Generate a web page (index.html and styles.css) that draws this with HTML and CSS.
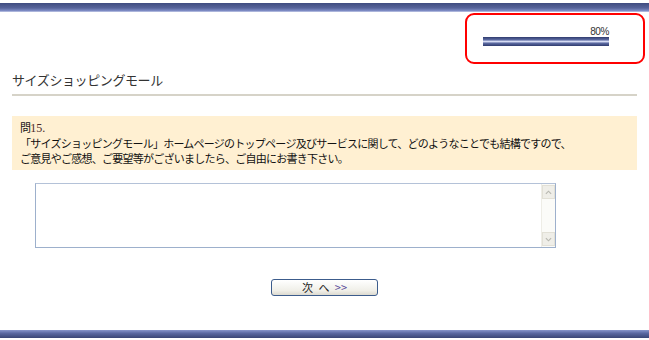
FILE: index.html
```html
<!DOCTYPE html>
<html lang="ja">
<head>
  <meta charset="UTF-8">
  <title>サイズショッピングモール アンケート</title>
  <link rel="stylesheet" href="styles.css">
</head>
<body>

<!-- 上部バー -->
<div class="bar bar-top"></div>

<!-- 進捗 -->
<div class="progress-row">
  <div class="progress-box">
    <div class="progress-label">80%</div>
    <div class="progress-track">
      <div class="progress-fill" style="width: 100%;"></div>
    </div>
  </div>
</div>

<div class="content">
  <h1 class="page-title">サイズショッピングモール</h1>

  <!-- 質問 -->
  <div class="question">
    <div class="q-no">問<span class="q-num">15.</span></div>
    <div>「サイズショッピングモール」ホームページのトップページ及びサービスに関して、どのようなことでも結構ですので、</div>
    <div>ご意見やご感想、ご要望等がございましたら、ご自由にお書き下さい。</div>
  </div>

  <!-- 回答欄 -->
  <div class="answer">
    <textarea class="answer-text"></textarea>
    <div class="scroll">
      <span class="scroll-btn">
        <svg viewBox="0 0 8 5"><path d="M1 4 L4 1 L7 4"/></svg>
      </span>
      <span class="scroll-btn">
        <svg viewBox="0 0 8 5"><path d="M1 1 L4 4 L7 1"/></svg>
      </span>
    </div>
  </div>

  <div class="actions">
    <button class="next-btn" type="button">次 へ <span class="arrows">&gt;&gt;</span></button>
  </div>
</div>

<!-- 下部バー -->
<div class="bar bar-bottom"></div>

</body>
</html>
```

FILE: styles.css
```css
/* 全体 */
body {
  margin: 0;
  background: #fff;
  font-family: "Noto Sans CJK JP", "Liberation Sans", sans-serif;
  font-size: 12px;
  color: #222;
}

/* 上下のバー */
.bar {
  height: 9px;
}

.bar-top {
  margin-top: 3px;
  background: linear-gradient(#3f4c80, #56639a 55%, #7d8bc4 85%, #c6cde8);
}

.bar-bottom {
  height: 8px;
  background: linear-gradient(#8896cc, #5a68a2 40%, #3a4676);
}

/* 進捗ボックス */
.progress-row {
  display: flex;
  justify-content: flex-end;
  padding: 1px 4px 0 0;
}

.progress-box {
  width: 180px;
  height: 51px;
  box-sizing: border-box;
  border: 2px solid #ff0000;
  border-radius: 9px;
  padding: 11px 0 0 16px;
}

.progress-label {
  width: 126px;
  text-align: right;
  font-family: "Liberation Sans", sans-serif;
  font-size: 10px;
  line-height: 11px;
  color: #333;
  letter-spacing: -0.4px;
}

.progress-track {
  width: 126px;
  height: 9px;
}

.progress-fill {
  height: 100%;
  background: linear-gradient(#2f3b6e, #5a68a0 30%, #d6dcf4 50%, #5a68a0 70%, #2f3b6e);
}

/* 本文 */
.content {
  margin: 0 12px;
}

.page-title {
  margin: 8px 0 0;
  padding: 0 0 6px;
  font-size: 13px;
  font-weight: normal;
  line-height: 16px;
  letter-spacing: -0.4px;
  color: #333;
  border-bottom: 2px solid #d6d3c8;
}

.question {
  margin-top: 20px;
  background: #fff0d2;
  padding: 4px 8px 4px;
  font-size: 11px;
  line-height: 15px;
  letter-spacing: -0.75px;
  white-space: nowrap;
  color: #111;
}

.q-num {
  font-family: "Liberation Serif", serif;
  font-size: 12px;
  letter-spacing: 0;
  color: #4a2a2a;
}

/* 回答欄 */
.answer {
  display: flex;
  width: 521px;
  height: 65px;
  box-sizing: border-box;
  margin: 13px 0 0 23px;
  border: 1px solid #9db0cc;
  border-top-color: #b4c2d8;
}

.answer-text {
  flex: 1;
  border: none;
  resize: none;
  margin: 0;
  padding: 2px;
  outline: none;
}

.scroll {
  width: 13px;
  display: flex;
  flex-direction: column;
  justify-content: space-between;
  background: #fbfbf8;
  border-left: 1px solid #eeede6;
}

.scroll-btn {
  height: 12px;
  display: flex;
  align-items: center;
  justify-content: center;
  background: #efeee8;
  border: 1px solid #e2e0d6;
  margin: 1px 0 1px 0;
}

.scroll-btn svg {
  width: 7px;
  height: 5px;
  fill: none;
  stroke: #b8b8b0;
  stroke-width: 1.3;
}

.actions {
  display: flex;
  justify-content: center;
  margin-top: 31px;
  margin-bottom: 34px;
}

.next-btn {
  width: 107px;
  height: 17px;
  padding: 0;
  border: 1px solid #3c5c8c;
  border-radius: 3px;
  background: linear-gradient(#ffffff, #f0efe8 70%, #dcdad0);
  font-family: "Noto Sans CJK JP", "Liberation Sans", sans-serif;
  font-size: 11px;
  line-height: 15px;
  color: #222;
  word-spacing: 3px;
}

.arrows {
  color: #5a4a9a;
  font-size: 11px;
}
```
